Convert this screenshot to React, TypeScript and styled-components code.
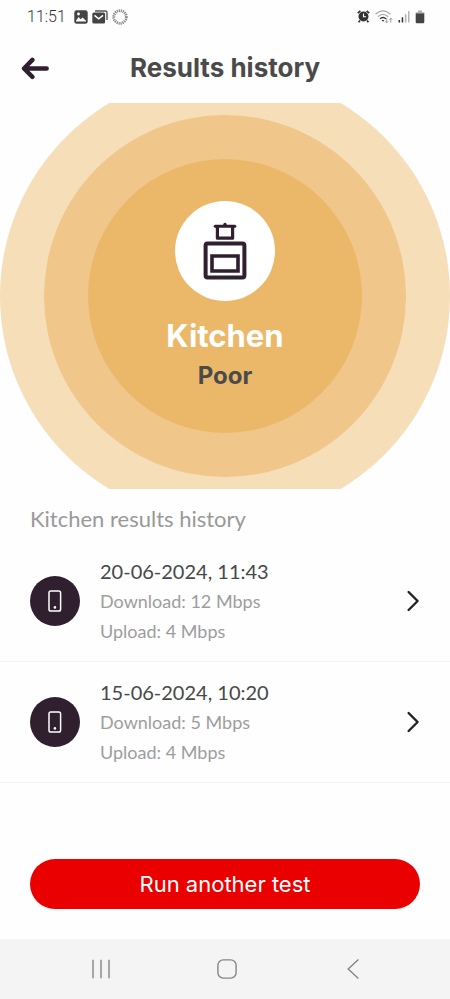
import React from "react";
import styled, { createGlobalStyle } from "styled-components";

const GlobalStyle = createGlobalStyle`
  *, *::before, *::after { box-sizing: border-box; }
  body { margin: 0; background: #fefefe; }
  h1, h2, h3, p, ul { margin: 0; padding: 0; }
  button { border: 0; padding: 0; background: none; cursor: pointer; }
  svg { display: block; }
`;

const display = `Inter, "Liberation Sans", sans-serif`;
const aubergine = "#2f1f2f";

const Screen = styled.div`
  min-height: 100vh;
  display: flex;
  flex-direction: column;
  color: #4a4a4a;
  font-family: Lato, "Liberation Sans", sans-serif;
`;

const StatusBar = styled.div`
  height: 33px;
  padding: 0 25px 0 27px;
  display: flex;
  align-items: center;
  justify-content: space-between;
`;

const StatusGroup = styled.div<{ $gap: number }>`
  display: flex;
  align-items: center;
  gap: ${(p) => p.$gap}px;
`;

const Clock = styled.time`
  margin-right: 4px;
  font: 300 16px/20px Roboto, sans-serif;
  color: #333;
`;

const Header = styled.header`
  height: 70px;
  padding: 0 20px;
  display: grid;
  grid-template-columns: 30px 1fr 30px;
  align-items: center;
`;

const Title = styled.h1`
  font: 700 26px/32px ${display};
  text-align: center;
  white-space: nowrap;
`;

const Hero = styled.section`
  height: 386px;
  display: grid;
  grid-template: 100% / 100%;
  place-items: center;
  overflow: hidden;
`;

const Ring = styled.div<{ $size: number; $color: string }>`
  grid-area: 1 / 1;
  width: ${(p) => p.$size}px;
  height: ${(p) => p.$size}px;
  border-radius: 50%;
  background: ${(p) => p.$color};
`;

const RoomSummary = styled.div`
  grid-area: 1 / 1;
  padding-top: 5px;
  display: flex;
  flex-direction: column;
  align-items: center;
`;

const RoomBadge = styled.div`
  width: 100px;
  height: 100px;
  margin-bottom: 15px;
  display: grid;
  place-items: center;
  border-radius: 50%;
  background: #fff;
`;

const RoomName = styled.h2`
  font: 700 31px/40px ${display};
  color: #fff;
`;

const Rating = styled.p`
  font: 700 24px/40px ${display};
`;

const SectionTitle = styled.h2`
  padding: 15px 30px 7px;
  font-size: 22px;
  line-height: 30px;
  font-weight: 400;
  color: #999;
`;

const Results = styled.ul`
  list-style: none;
`;

const ResultRow = styled.button`
  width: 100%;
  padding: 15px 30px;
  display: flex;
  align-items: center;
  gap: 20px;
  border-bottom: 1px solid #f2f2f2;
  font-family: inherit;
  text-align: left;
`;

const DeviceBadge = styled.span`
  width: 50px;
  height: 50px;
  flex: none;
  display: grid;
  place-items: center;
  border-radius: 50%;
  background: ${aubergine};
`;

const ResultText = styled.span`
  flex: 1;
  display: flex;
  flex-direction: column;
`;

const ResultDate = styled.span`
  font-size: 20px;
  line-height: 30px;
  color: #484848;
`;

const Speed = styled.span`
  font-size: 18px;
  line-height: 30px;
  color: #9d9d9d;
`;

const Actions = styled.div`
  margin-top: auto;
  padding: 30px;
`;

const PrimaryButton = styled.button`
  width: 100%;
  height: 50px;
  border-radius: 25px;
  background: #eb0000;
  color: #fff;
  font: 400 22px/30px ${display};
`;

const NavBar = styled.nav`
  height: 60px;
  padding: 0 34px 0 38px;
  display: flex;
  background: #f4f4f4;
`;

const NavButton = styled.button`
  flex: 1;
  display: grid;
  place-items: center;
`;

const PictureIcon = () => (
  <svg width="14" height="14" viewBox="0 0 14 14" aria-hidden="true">
    <rect x="0.3" y="0.3" width="13.4" height="13.4" rx="2.5" fill="#444" />
    <path d="M2 10.8 4.6 7l2 2.2 2-1.6 3.4 3.2v.8H2z" fill="#fff" />
    <circle cx="4.5" cy="4" r="1.4" fill="#fff" />
  </svg>
);

const MailIcon = () => (
  <svg width="16" height="14" viewBox="0 0 16 14" aria-hidden="true">
    <path d="M3 1h10.5Q15 1 15 2.5V10" fill="none" stroke="#555" strokeWidth="1.4" />
    <rect x="0.3" y="2.6" width="12.8" height="10.8" rx="1.5" fill="#444" />
    <path d="m2.5 5.4 4.2 3.4L11 5.4" fill="none" stroke="#fff" strokeWidth="1.5" />
  </svg>
);

const LoaderIcon = () => (
  <svg width="16" height="16" viewBox="0 0 16 16" aria-hidden="true">
    <circle cx="8" cy="8" r="6.3" fill="none" stroke="#888" strokeWidth="2.8" strokeDasharray="1.2 0.78" />
  </svg>
);

const AlarmIcon = () => (
  <svg width="13" height="13" viewBox="0 0 13 13" aria-hidden="true">
    <circle cx="6.5" cy="6.5" r="5" fill="#333" />
    <path d="M.8 3.2 3.4.8M12.2 3.2 9.6.8M3 10.5l-1.4 1.8M10 10.5l1.4 1.8" stroke="#333" strokeWidth="1.7" />
    <path d="M6.5 3.6v3.1h2.6" fill="none" stroke="#fff" strokeWidth="1.1" />
  </svg>
);

const WifiIcon = () => (
  <svg width="18" height="14" viewBox="0 0 18 14" fill="none" strokeWidth="1.2" aria-hidden="true">
    <path d="M.6 4.2Q8-2.4 15.4 4.2M2.8 6.7Q8 2 13.2 6.7" stroke="#aaa" />
    <path d="M5 8.8q3-2.6 6 0" stroke="#333" strokeWidth="1.5" />
    <path d="m6.6 10 1.4 1.7L9.4 10z" fill="#333" />
    <path d="M11.7 8.2v4.6m-1.3-1.4 1.3 1.4 1.3-1.4M15.8 12.6V8.2m-1.4 1.4 1.4-1.4 1.4 1.4" stroke="#999" strokeWidth="1" />
  </svg>
);

const SignalIcon = () => (
  <svg width="12" height="13" viewBox="0 0 12 13" aria-hidden="true">
    <path d="M.5 10h1.6v2.6H.5zM3.7 7.2h1.5v5.4H3.7z" fill="#333" />
    <path d="M6.9 4.2h1.5v8.4H6.9zM10 1h1.5v11.6H10z" fill="#b4b4b4" />
  </svg>
);

const BatteryIcon = () => (
  <svg width="10" height="14" viewBox="0 0 10 14" aria-hidden="true">
    <path d="M3 .6h4v1.6h2.3V4H.7V2.2H3z" fill="#b0b0b0" />
    <path d="M.7 3.5h8.6v8.6q0 1.2-1.2 1.2H1.9q-1.2 0-1.2-1.2z" fill="#444" />
  </svg>
);

const BackArrowIcon = () => (
  <svg width="30" height="24" viewBox="0 0 30 24" fill="none" stroke={aubergine} strokeWidth="4.4" strokeLinecap="round" strokeLinejoin="round" aria-hidden="true">
    <path d="M12.4 3.9 4 12.5l8.4 8.4M4.6 12.5h22.1" />
  </svg>
);

const CookerIcon = () => (
  <svg width="44" height="60" viewBox="0 0 44 60" fill="none" stroke={aubergine} strokeLinejoin="round" strokeLinecap="round" aria-hidden="true">
    <path d="M12.2 5.2h19.6" strokeWidth="3" />
    <circle cx="22" cy="3.4" r="1.7" fill={aubergine} stroke="none" />
    <path d="M14.4 5.8v11.4h15.2V5.8" strokeWidth="3.2" />
    <rect x="2.6" y="22.6" width="38.8" height="34" rx="2" strokeWidth="4" />
    <path d="M9 35h26v15H9z" strokeWidth="3.6" strokeLinejoin="miter" />
  </svg>
);

const PhoneIcon = () => (
  <svg width="14" height="22" viewBox="0 0 14 22" aria-hidden="true">
    <rect x="1" y="1" width="11.6" height="20" rx="1.8" fill="none" stroke="#fff" strokeWidth="1.5" />
    <circle cx="6.9" cy="17.4" r="1.3" fill="#fff" />
  </svg>
);

const ChevronIcon = () => (
  <svg width="14" height="24" viewBox="0 0 14 24" fill="none" stroke="#222" strokeWidth="2.4" strokeLinecap="round" strokeLinejoin="round" aria-hidden="true">
    <path d="m2.6 3 9 9-9 9" />
  </svg>
);

const RecentsIcon = () => (
  <svg width="20" height="20" viewBox="0 0 20 20" fill="none" stroke="#858585" strokeWidth="1.4" aria-hidden="true">
    <path d="M2 .7v18.6M10 .7v18.6M18 .7v18.6" />
  </svg>
);

const HomeIcon = () => (
  <svg width="20" height="20" viewBox="0 0 20 20" fill="none" stroke="#858585" strokeWidth="1.4" aria-hidden="true">
    <rect x="0.9" y="0.9" width="18.2" height="18.2" rx="5.4" />
  </svg>
);

const BackIcon = () => (
  <svg width="12" height="20" viewBox="0 0 12 20" fill="none" stroke="#858585" strokeWidth="1.4" aria-hidden="true">
    <path d="M11.4.6 1.2 10l10.2 9.4" />
  </svg>
);

const results = [
  { date: "20-06-2024, 11:43", download: 12, upload: 4 },
  { date: "15-06-2024, 10:20", download: 5, upload: 4 },
];

export default function App() {
  return (
    <>
      <GlobalStyle />
      <Screen>
        <StatusBar>
          <StatusGroup $gap={4}>
            <Clock>11:51</Clock>
            <PictureIcon />
            <MailIcon />
            <LoaderIcon />
          </StatusGroup>
          <StatusGroup $gap={5}>
            <AlarmIcon />
            <WifiIcon />
            <SignalIcon />
            <BatteryIcon />
          </StatusGroup>
        </StatusBar>
        <Header>
          <button aria-label="Back">
            <BackArrowIcon />
          </button>
          <Title>Results history</Title>
        </Header>
        <Hero>
          <Ring $size={450} $color="#f6deb9" />
          <Ring $size={362} $color="#f1c68a" />
          <Ring $size={274} $color="#ebb86a" />
          <RoomSummary>
            <RoomBadge>
              <CookerIcon />
            </RoomBadge>
            <RoomName>Kitchen</RoomName>
            <Rating>Poor</Rating>
          </RoomSummary>
        </Hero>
        <SectionTitle>Kitchen results history</SectionTitle>
        <Results>
          {results.map((r) => (
            <li key={r.date}>
              <ResultRow>
                <DeviceBadge>
                  <PhoneIcon />
                </DeviceBadge>
                <ResultText>
                  <ResultDate>{r.date}</ResultDate>
                  <Speed>Download: {r.download} Mbps</Speed>
                  <Speed>Upload: {r.upload} Mbps</Speed>
                </ResultText>
                <ChevronIcon />
              </ResultRow>
            </li>
          ))}
        </Results>
        <Actions>
          <PrimaryButton>Run another test</PrimaryButton>
        </Actions>
        <NavBar aria-label="System">
          <NavButton aria-label="Recent apps">
            <RecentsIcon />
          </NavButton>
          <NavButton aria-label="Home">
            <HomeIcon />
          </NavButton>
          <NavButton aria-label="Back">
            <BackIcon />
          </NavButton>
        </NavBar>
      </Screen>
    </>
  );
}
